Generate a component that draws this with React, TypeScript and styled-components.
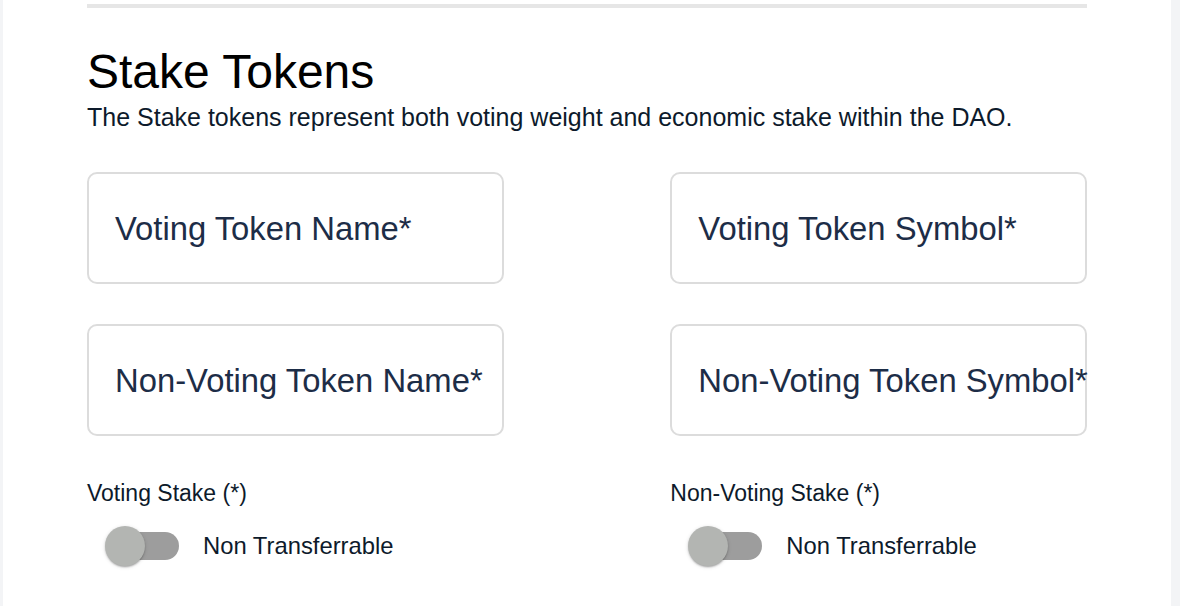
import React from "react";
import styled, { createGlobalStyle } from "styled-components";

const Global = createGlobalStyle`
  html, body { margin: 0; padding: 0; background: #f3f4f6; }
  body { font-family: "Liberation Sans", Arial, Helvetica, sans-serif; }
`;

const Page = styled.div`
  display: flex;
  justify-content: center;
  min-height: 606px;
  padding-left: 3px;
  padding-right: 9px;
`;

const Panel = styled.main`
  width: 1168px;
  background: #ffffff;
  padding: 4px 84px 40px;
  box-sizing: border-box;
`;

const Rule = styled.hr`
  margin: 0;
  border: none;
  height: 4px;
  background: #e6e6e6;
`;

const Title = styled.h2`
  margin: 37px 0 0;
  font-size: 48px;
  font-weight: 400;
  line-height: 54px;
  color: #000;
`;

const Subtitle = styled.p`
  margin: 4px 0 0;
  font-size: 25px;
  line-height: 29px;
  color: #0d1a2b;
`;

const Grid = styled.div`
  display: grid;
  grid-template-columns: minmax(0, 5fr) minmax(0, 2fr) minmax(0, 5fr);
  row-gap: 40px;
  margin-top: 40px;
`;

const Field = styled.div<{ $col: number }>`
  grid-column: ${(p) => p.$col};
  height: 112px;
  box-sizing: border-box;
  border: 2px solid #dcdcdc;
  border-radius: 10px;
  display: flex;
  align-items: center;
  padding-left: 26px;
  padding-top: 2px;
  white-space: nowrap;
  overflow: visible;
`;

const Placeholder = styled.span`
  font-size: 32.8px;
  color: #1d2d47;
`;

const StakeGroup = styled.div<{ $col: number }>`
  grid-column: ${(p) => p.$col};
  display: flex;
  flex-direction: column;
  margin-top: 3px;
`;

const StakeLabel = styled.div`
  font-size: 23px;
  line-height: 28px;
  color: #0d1a2b;
`;

const ToggleRow = styled.label`
  display: flex;
  align-items: center;
  margin-top: 1px;
`;

const SwitchRoot = styled.span`
  position: relative;
  display: inline-flex;
  width: 116px;
  height: 76px;
  padding: 24px;
  box-sizing: border-box;
  flex-shrink: 0;
`;

const Track = styled.span`
  width: 100%;
  height: 100%;
  border-radius: 14px;
  background: #9d9d9d;
`;

const Thumb = styled.span`
  position: absolute;
  top: 18px;
  left: 18px;
  width: 40px;
  height: 40px;
  border-radius: 50%;
  background: #b3b5b2;
  box-shadow: 0 2px 2px -1px rgba(0,0,0,0.2), 0 1px 2px 0 rgba(0,0,0,0.14), 0 1px 4px 0 rgba(0,0,0,0.12);
`;

const ToggleText = styled.span`
  font-size: 23.8px;
  color: #0d1a2b;
`;

function Toggle({ text }: { text: string }) {
  return (
    <ToggleRow>
      <SwitchRoot>
        <Track />
        <Thumb />
      </SwitchRoot>
      <ToggleText>{text}</ToggleText>
    </ToggleRow>
  );
}

export default function App() {
  return (
    <>
      <Global />
      <Page>
        <Panel>
          <Rule />
          <Title>Stake Tokens</Title>
          <Subtitle>
            The Stake tokens represent both voting weight and economic stake within the DAO.
          </Subtitle>
          <Grid>
            <Field $col={1}>
              <Placeholder>Voting Token Name*</Placeholder>
            </Field>
            <Field $col={3}>
              <Placeholder>Voting Token Symbol*</Placeholder>
            </Field>
            <Field $col={1}>
              <Placeholder>Non-Voting Token Name*</Placeholder>
            </Field>
            <Field $col={3}>
              <Placeholder>Non-Voting Token Symbol*</Placeholder>
            </Field>
            <StakeGroup $col={1}>
              <StakeLabel>Voting Stake (*)</StakeLabel>
              <Toggle text="Non Transferrable" />
            </StakeGroup>
            <StakeGroup $col={3}>
              <StakeLabel>Non-Voting Stake (*)</StakeLabel>
              <Toggle text="Non Transferrable" />
            </StakeGroup>
          </Grid>
        </Panel>
      </Page>
    </>
  );
}
